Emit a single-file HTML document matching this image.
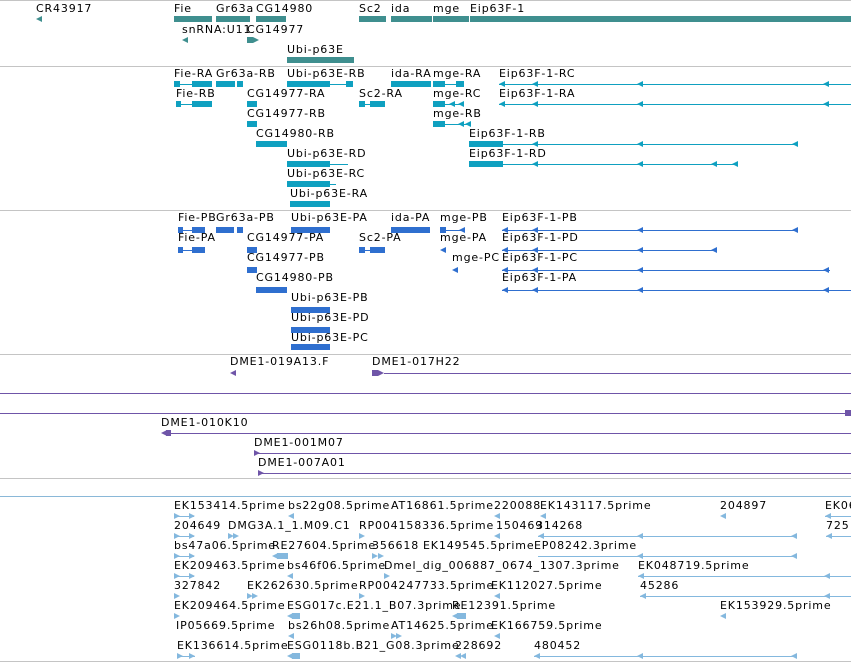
<!DOCTYPE html>
<html><head><meta charset="utf-8"><style>
body{margin:0;width:851px;height:662px;background:#fff;position:relative;overflow:hidden;font-family:"DejaVu Sans","Liberation Sans",sans-serif}
div{position:absolute}
.l{font-size:11px;line-height:13px;color:#000;white-space:nowrap;letter-spacing:0.85px}
.b{height:6px;background:currentColor}
.n{height:1px;background:currentColor}
.L{width:0;height:0;border-top:3px solid transparent;border-bottom:3px solid transparent;border-right:6px solid currentColor}
.R{width:0;height:0;border-top:3px solid transparent;border-bottom:3px solid transparent;border-left:6px solid currentColor}
.g{left:0;width:851px;height:1px;background:#c4c4c4}
.G{color:#3f8f8f}.T{color:#0fa0c0}.P{color:#2f6fcf}.V{color:#6f55a8}.E{color:#84b8de}
</style></head><body>
<div class="g" style="top:0"></div>
<div class="g" style="top:66px"></div>
<div class="g" style="top:210px"></div>
<div class="g" style="top:354px"></div>
<div class="g" style="top:478px"></div>
<div class="g" style="top:496px;background:#8ab8d8"></div>
<div class="g" style="top:661px"></div>

<div class="G">
<div class="l" style="left:36px;top:2px">CR43917</div><div class="L" style="left:36px;top:16px"></div>
<div class="l" style="left:174px;top:2px">Fie</div><div class="b" style="left:174px;width:38px;top:16px"></div>
<div class="l" style="left:216px;top:2px">Gr63a</div><div class="b" style="left:216px;width:34px;top:16px"></div>
<div class="l" style="left:256px;top:2px">CG14980</div><div class="b" style="left:256px;width:30px;top:16px"></div>
<div class="l" style="left:359px;top:2px">Sc2</div><div class="b" style="left:359px;width:27px;top:16px"></div>
<div class="l" style="left:391px;top:2px">ida</div><div class="b" style="left:391px;width:41px;top:16px"></div>
<div class="l" style="left:433px;top:2px">mge</div><div class="b" style="left:433px;width:36px;top:16px"></div>
<div class="l" style="left:470px;top:2px">Eip63F-1</div><div class="b" style="left:470px;width:381px;top:16px"></div>
<div class="l" style="left:182px;top:23px">snRNA:U11</div><div class="L" style="left:182px;top:37px"></div>
<div class="l" style="left:247px;top:23px">CG14977</div><div class="b" style="left:247px;width:6px;top:37px"></div><div class="R" style="left:253px;top:37px"></div>
<div class="l" style="left:287px;top:43px">Ubi-p63E</div><div class="b" style="left:287px;width:67px;top:57px"></div>
</div>

<div class="T">
<div class="l" style="left:174px;top:67px">Fie-RA</div><div class="n" style="left:174px;width:38px;top:84px"></div><div class="b" style="left:174px;width:6px;top:81px"></div><div class="b" style="left:192px;width:20px;top:81px"></div>
<div class="l" style="left:216px;top:67px">Gr63a-RB</div><div class="b" style="left:216px;width:19px;top:81px"></div><div class="b" style="left:237px;width:6px;top:81px"></div>
<div class="l" style="left:287px;top:67px">Ubi-p63E-RB</div><div class="b" style="left:287px;width:43px;top:81px"></div><div class="n" style="left:330px;width:23px;top:84px"></div><div class="b" style="left:346px;width:7px;top:81px"></div>
<div class="l" style="left:391px;top:67px">ida-RA</div><div class="b" style="left:391px;width:40px;top:81px"></div>
<div class="l" style="left:433px;top:67px">mge-RA</div><div class="b" style="left:433px;width:12px;top:81px"></div><div class="n" style="left:445px;width:19px;top:84px"></div><div class="b" style="left:456px;width:8px;top:81px"></div>
<div class="l" style="left:499px;top:67px">Eip63F-1-RC</div><div class="n" style="left:499px;width:352px;top:84px"></div><div class="L" style="left:499px;top:81px"></div><div class="L" style="left:532px;top:81px"></div><div class="L" style="left:637px;top:81px"></div><div class="L" style="left:823px;top:81px"></div>

<div class="l" style="left:176px;top:87px">Fie-RB</div><div class="n" style="left:176px;width:36px;top:104px"></div><div class="b" style="left:176px;width:5px;top:101px"></div><div class="b" style="left:192px;width:20px;top:101px"></div>
<div class="l" style="left:247px;top:87px">CG14977-RA</div><div class="b" style="left:247px;width:10px;top:101px"></div>
<div class="l" style="left:359px;top:87px">Sc2-RA</div><div class="n" style="left:359px;width:26px;top:104px"></div><div class="b" style="left:359px;width:6px;top:101px"></div><div class="b" style="left:370px;width:15px;top:101px"></div>
<div class="l" style="left:433px;top:87px">mge-RC</div><div class="b" style="left:433px;width:12px;top:101px"></div><div class="n" style="left:445px;width:19px;top:104px"></div><div class="L" style="left:449px;top:101px"></div><div class="L" style="left:458px;top:101px"></div>
<div class="l" style="left:499px;top:87px">Eip63F-1-RA</div><div class="n" style="left:499px;width:352px;top:104px"></div><div class="L" style="left:499px;top:101px"></div><div class="L" style="left:532px;top:101px"></div><div class="L" style="left:637px;top:101px"></div><div class="L" style="left:823px;top:101px"></div>

<div class="l" style="left:247px;top:107px">CG14977-RB</div><div class="b" style="left:247px;width:10px;top:121px"></div>
<div class="l" style="left:433px;top:107px">mge-RB</div><div class="b" style="left:433px;width:12px;top:121px"></div><div class="n" style="left:445px;width:25px;top:124px"></div><div class="L" style="left:458px;top:121px"></div><div class="L" style="left:465px;top:121px"></div>

<div class="l" style="left:256px;top:127px">CG14980-RB</div><div class="b" style="left:256px;width:31px;top:141px"></div>
<div class="l" style="left:469px;top:127px">Eip63F-1-RB</div><div class="b" style="left:469px;width:34px;top:141px"></div><div class="n" style="left:503px;width:295px;top:144px"></div><div class="L" style="left:532px;top:141px"></div><div class="L" style="left:637px;top:141px"></div><div class="L" style="left:792px;top:141px"></div>

<div class="l" style="left:287px;top:147px">Ubi-p63E-RD</div><div class="b" style="left:287px;width:43px;top:161px"></div><div class="n" style="left:330px;width:18px;top:164px"></div>
<div class="l" style="left:469px;top:147px">Eip63F-1-RD</div><div class="b" style="left:469px;width:34px;top:161px"></div><div class="n" style="left:503px;width:235px;top:164px"></div><div class="L" style="left:532px;top:161px"></div><div class="L" style="left:637px;top:161px"></div><div class="L" style="left:711px;top:161px"></div><div class="L" style="left:732px;top:161px"></div>

<div class="l" style="left:287px;top:167px">Ubi-p63E-RC</div><div class="b" style="left:287px;width:43px;top:181px"></div><div class="n" style="left:330px;width:6px;top:184px"></div>
<div class="l" style="left:290px;top:187px">Ubi-p63E-RA</div><div class="b" style="left:290px;width:40px;top:201px"></div>
</div>

<div class="P">
<div class="l" style="left:178px;top:211px">Fie-PB</div><div class="n" style="left:178px;width:27px;top:230px"></div><div class="b" style="left:178px;width:5px;top:227px"></div><div class="b" style="left:192px;width:13px;top:227px"></div>
<div class="l" style="left:216px;top:211px">Gr63a-PB</div><div class="b" style="left:216px;width:18px;top:227px"></div><div class="b" style="left:237px;width:6px;top:227px"></div>
<div class="l" style="left:291px;top:211px">Ubi-p63E-PA</div><div class="b" style="left:291px;width:39px;top:227px"></div>
<div class="l" style="left:391px;top:211px">ida-PA</div><div class="b" style="left:391px;width:39px;top:227px"></div>
<div class="l" style="left:440px;top:211px">mge-PB</div><div class="b" style="left:440px;width:6px;top:227px"></div><div class="n" style="left:446px;width:19px;top:230px"></div><div class="L" style="left:459px;top:227px"></div>
<div class="l" style="left:502px;top:211px">Eip63F-1-PB</div><div class="n" style="left:502px;width:296px;top:230px"></div><div class="L" style="left:502px;top:227px"></div><div class="L" style="left:532px;top:227px"></div><div class="L" style="left:637px;top:227px"></div><div class="L" style="left:792px;top:227px"></div>

<div class="l" style="left:178px;top:231px">Fie-PA</div><div class="n" style="left:178px;width:27px;top:250px"></div><div class="b" style="left:178px;width:5px;top:247px"></div><div class="b" style="left:192px;width:13px;top:247px"></div>
<div class="l" style="left:247px;top:231px">CG14977-PA</div><div class="b" style="left:247px;width:10px;top:247px"></div>
<div class="l" style="left:359px;top:231px">Sc2-PA</div><div class="n" style="left:359px;width:26px;top:250px"></div><div class="b" style="left:359px;width:6px;top:247px"></div><div class="b" style="left:370px;width:15px;top:247px"></div>
<div class="l" style="left:440px;top:231px">mge-PA</div><div class="L" style="left:440px;top:247px"></div>
<div class="l" style="left:502px;top:231px">Eip63F-1-PD</div><div class="n" style="left:502px;width:214px;top:250px"></div><div class="L" style="left:502px;top:247px"></div><div class="L" style="left:532px;top:247px"></div><div class="L" style="left:637px;top:247px"></div><div class="L" style="left:711px;top:247px"></div>

<div class="l" style="left:247px;top:251px">CG14977-PB</div><div class="b" style="left:247px;width:10px;top:267px"></div>
<div class="l" style="left:452px;top:251px">mge-PC</div><div class="L" style="left:452px;top:267px"></div>
<div class="l" style="left:502px;top:251px">Eip63F-1-PC</div><div class="n" style="left:502px;width:328px;top:270px"></div><div class="L" style="left:502px;top:267px"></div><div class="L" style="left:532px;top:267px"></div><div class="L" style="left:637px;top:267px"></div><div class="L" style="left:823px;top:267px"></div>

<div class="l" style="left:256px;top:271px">CG14980-PB</div><div class="b" style="left:256px;width:31px;top:287px"></div>
<div class="l" style="left:502px;top:271px">Eip63F-1-PA</div><div class="n" style="left:502px;width:349px;top:290px"></div><div class="L" style="left:502px;top:287px"></div><div class="L" style="left:532px;top:287px"></div><div class="L" style="left:637px;top:287px"></div><div class="L" style="left:823px;top:287px"></div>

<div class="l" style="left:291px;top:291px">Ubi-p63E-PB</div><div class="b" style="left:291px;width:39px;top:307px"></div>
<div class="l" style="left:291px;top:311px">Ubi-p63E-PD</div><div class="b" style="left:291px;width:39px;top:327px"></div>
<div class="l" style="left:291px;top:331px">Ubi-p63E-PC</div><div class="b" style="left:291px;width:39px;top:344px"></div>
</div>

<div class="V">
<div class="l" style="left:230px;top:355px">DME1-019A13.F</div><div class="L" style="left:230px;top:370px"></div>
<div class="l" style="left:372px;top:355px">DME1-017H22</div><div class="b" style="left:372px;width:6px;top:370px"></div><div class="R" style="left:378px;top:370px"></div><div class="n" style="left:384px;width:467px;top:373px"></div>
<div class="n" style="left:0;width:851px;top:393px"></div>
<div class="n" style="left:0;width:851px;top:413px"></div><div class="b" style="left:845px;width:6px;top:410px"></div>
<div class="l" style="left:161px;top:416px">DME1-010K10</div><div class="L" style="left:161px;top:430px"></div><div class="b" style="left:166px;width:5px;top:430px"></div><div class="n" style="left:167px;width:684px;top:433px"></div>
<div class="l" style="left:254px;top:436px">DME1-001M07</div><div class="R" style="left:254px;top:450px"></div><div class="n" style="left:254px;width:597px;top:453px"></div>
<div class="l" style="left:258px;top:456px">DME1-007A01</div><div class="R" style="left:258px;top:470px"></div><div class="n" style="left:258px;width:593px;top:473px"></div>
</div>

<div class="E">
<div class="l" style="left:174px;top:499px">EK153414.5prime</div><div class="n" style="left:174px;width:20px;top:516px"></div><div class="R" style="left:174px;top:513px"></div><div class="R" style="left:189px;top:513px"></div>
<div class="l" style="left:288px;top:499px">bs22g08.5prime</div><div class="L" style="left:288px;top:513px"></div>
<div class="l" style="left:391px;top:499px">AT16861.5prime</div>
<div class="l" style="left:494px;top:499px">220088</div><div class="L" style="left:494px;top:513px"></div>
<div class="l" style="left:540px;top:499px">EK143117.5prime</div><div class="L" style="left:540px;top:513px"></div>
<div class="l" style="left:720px;top:499px">204897</div><div class="L" style="left:720px;top:513px"></div>
<div class="l" style="left:825px;top:499px">EK06</div><div class="L" style="left:825px;top:513px"></div><div class="n" style="left:825px;width:26px;top:516px"></div>

<div class="l" style="left:174px;top:519px">204649</div><div class="n" style="left:174px;width:20px;top:536px"></div><div class="R" style="left:174px;top:533px"></div><div class="R" style="left:189px;top:533px"></div>
<div class="l" style="left:228px;top:519px">DMG3A.1_1.M09.C1</div><div class="R" style="left:228px;top:533px"></div><div class="R" style="left:233px;top:533px"></div>
<div class="l" style="left:359px;top:519px">RP004158336.5prime</div><div class="R" style="left:359px;top:533px"></div>
<div class="l" style="left:496px;top:519px">150469</div><div class="L" style="left:494px;top:533px"></div>
<div class="l" style="left:536px;top:519px">314268</div><div class="n" style="left:538px;width:259px;top:536px"></div><div class="L" style="left:538px;top:533px"></div><div class="L" style="left:637px;top:533px"></div><div class="L" style="left:791px;top:533px"></div>
<div class="l" style="left:826px;top:519px">725</div><div class="L" style="left:826px;top:533px"></div><div class="n" style="left:826px;width:25px;top:536px"></div>

<div class="l" style="left:174px;top:539px">bs47a06.5prime</div><div class="n" style="left:174px;width:20px;top:556px"></div><div class="R" style="left:174px;top:553px"></div><div class="R" style="left:189px;top:553px"></div>
<div class="l" style="left:272px;top:539px">RE27604.5prime</div><div class="L" style="left:272px;top:553px"></div><div class="b" style="left:277px;width:11px;top:553px"></div>
<div class="l" style="left:372px;top:539px">356618</div><div class="R" style="left:372px;top:553px"></div><div class="R" style="left:378px;top:553px"></div>
<div class="l" style="left:423px;top:539px">EK149545.5prime</div>
<div class="l" style="left:534px;top:539px">EP08242.3prime</div><div class="n" style="left:538px;width:259px;top:556px"></div><div class="L" style="left:637px;top:553px"></div><div class="L" style="left:791px;top:553px"></div>

<div class="l" style="left:174px;top:559px">EK209463.5prime</div><div class="n" style="left:174px;width:20px;top:576px"></div><div class="R" style="left:174px;top:573px"></div><div class="R" style="left:189px;top:573px"></div>
<div class="l" style="left:287px;top:559px">bs46f06.5prime</div><div class="L" style="left:287px;top:573px"></div>
<div class="l" style="left:384px;top:559px">Dmel_dig_006887_0674_1307.3prime</div><div class="R" style="left:384px;top:573px"></div>
<div class="l" style="left:638px;top:559px">EK048719.5prime</div><div class="n" style="left:638px;width:213px;top:576px"></div><div class="L" style="left:638px;top:573px"></div><div class="L" style="left:824px;top:573px"></div>

<div class="l" style="left:174px;top:579px">327842</div><div class="R" style="left:174px;top:593px"></div>
<div class="l" style="left:247px;top:579px">EK262630.5prime</div><div class="R" style="left:247px;top:593px"></div><div class="R" style="left:252px;top:593px"></div>
<div class="l" style="left:359px;top:579px">RP004247733.5prime</div><div class="R" style="left:359px;top:593px"></div>
<div class="l" style="left:491px;top:579px">EK112027.5prime</div><div class="L" style="left:494px;top:593px"></div>
<div class="l" style="left:640px;top:579px">45286</div><div class="n" style="left:640px;width:211px;top:596px"></div><div class="L" style="left:640px;top:593px"></div><div class="L" style="left:824px;top:593px"></div>

<div class="l" style="left:174px;top:599px">EK209464.5prime</div><div class="R" style="left:174px;top:613px"></div>
<div class="l" style="left:287px;top:599px">ESG017c.E21.1_B07.3prime</div><div class="L" style="left:287px;top:613px"></div><div class="b" style="left:292px;width:8px;top:613px"></div>
<div class="l" style="left:452px;top:599px">RE12391.5prime</div><div class="L" style="left:452px;top:613px"></div><div class="b" style="left:457px;width:9px;top:613px"></div>
<div class="l" style="left:720px;top:599px">EK153929.5prime</div><div class="L" style="left:720px;top:613px"></div>

<div class="l" style="left:176px;top:619px">IP05669.5prime</div>
<div class="l" style="left:288px;top:619px">bs26h08.5prime</div><div class="L" style="left:288px;top:633px"></div>
<div class="l" style="left:391px;top:619px">AT14625.5prime</div><div class="R" style="left:391px;top:633px"></div><div class="R" style="left:396px;top:633px"></div>
<div class="l" style="left:491px;top:619px">EK166759.5prime</div><div class="L" style="left:494px;top:633px"></div>

<div class="l" style="left:177px;top:639px">EK136614.5prime</div><div class="n" style="left:177px;width:18px;top:656px"></div><div class="R" style="left:177px;top:653px"></div><div class="R" style="left:189px;top:653px"></div>
<div class="l" style="left:287px;top:639px">ESG0118b.B21_G08.3prime</div><div class="L" style="left:287px;top:653px"></div><div class="b" style="left:292px;width:8px;top:653px"></div>
<div class="l" style="left:455px;top:639px">228692</div><div class="L" style="left:455px;top:653px"></div><div class="L" style="left:460px;top:653px"></div>
<div class="l" style="left:534px;top:639px">480452</div><div class="n" style="left:534px;width:263px;top:656px"></div><div class="L" style="left:534px;top:653px"></div><div class="L" style="left:637px;top:653px"></div><div class="L" style="left:791px;top:653px"></div>
</div>
</body></html>
